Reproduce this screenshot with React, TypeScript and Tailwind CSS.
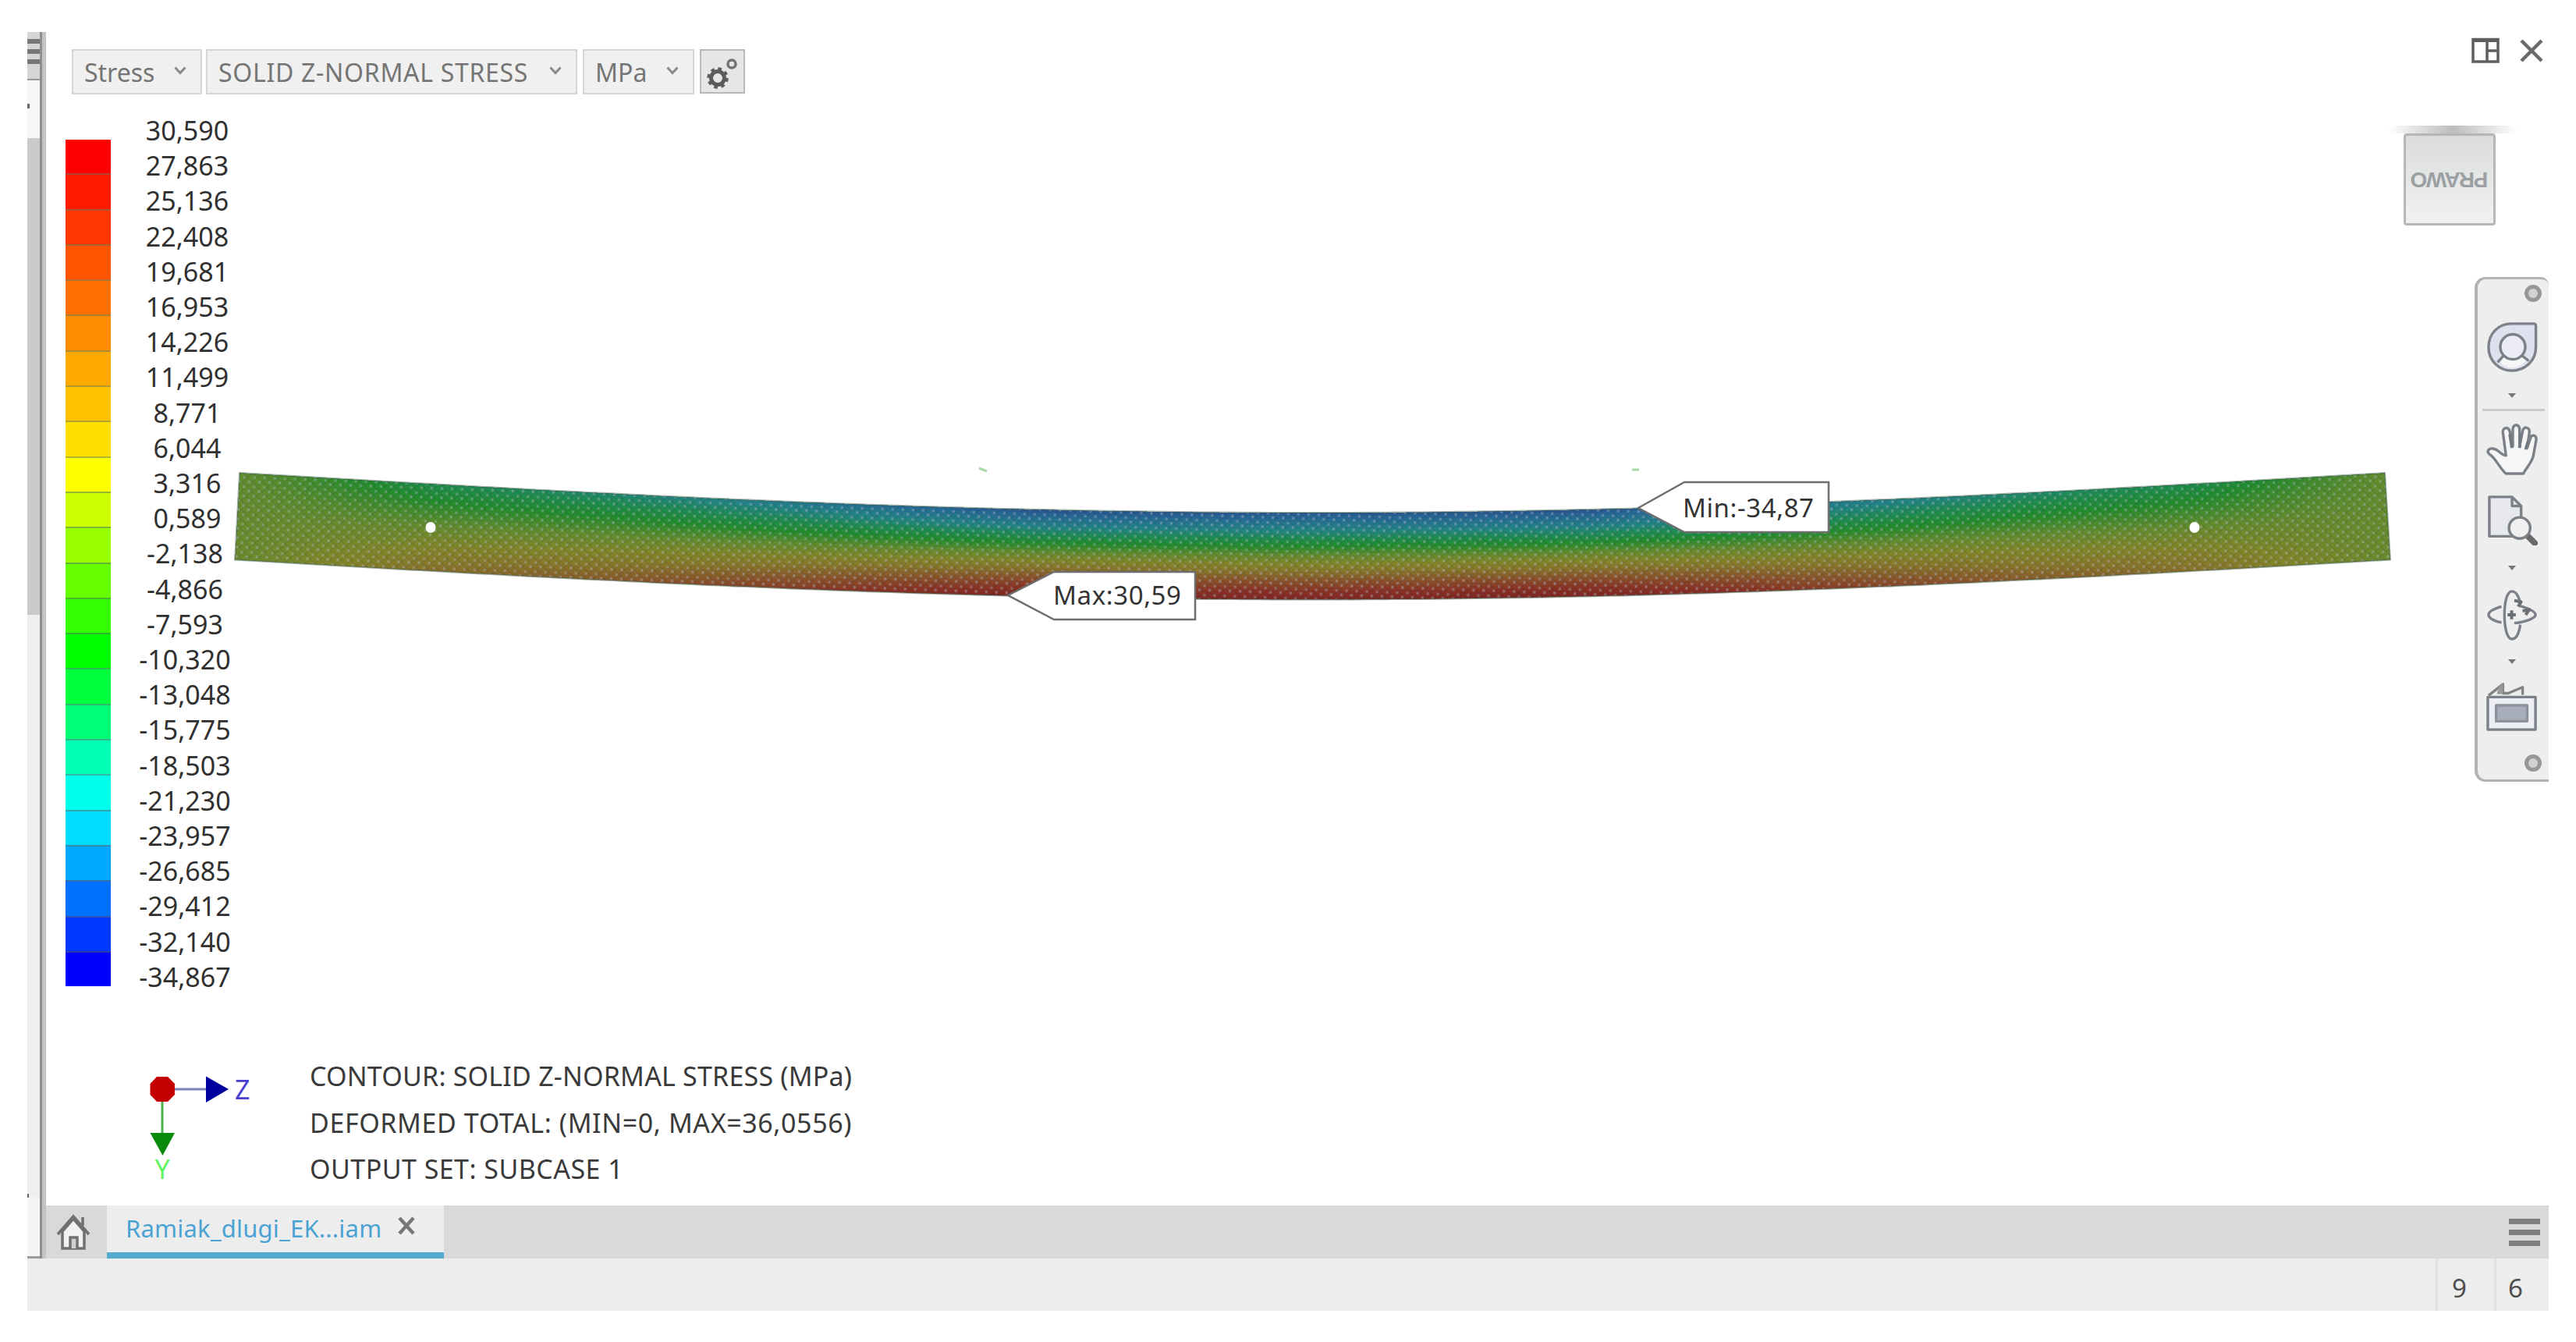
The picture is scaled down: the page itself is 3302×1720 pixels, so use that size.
import React, { ReactNode } from 'react';
import { clsx } from 'clsx';

// Types
interface LegendBand {
  label: string;
  color: string;
}

interface CalloutProps {
  x: number;
  y: number;
  top: number;
  bottom: number;
  right: number;
  text: string;
  textX: number;
  textWidth: number;
}

// Legend data, highest stress first
const bands: LegendBand[] = [
  { label: '30,590', color: '#ff0000' },
  { label: '27,863', color: '#ff1a00' },
  { label: '25,136', color: '#ff3700' },
  { label: '22,408', color: '#ff5500' },
  { label: '19,681', color: '#ff7000' },
  { label: '16,953', color: '#ff8c00' },
  { label: '14,226', color: '#ffa800' },
  { label: '11,499', color: '#ffc200' },
  { label: '8,771', color: '#ffdf00' },
  { label: '6,044', color: '#ffff00' },
  { label: '3,316', color: '#ccff00' },
  { label: '0,589', color: '#99ff00' },
  { label: '-2,138', color: '#66ff00' },
  { label: '-4,866', color: '#33ff00' },
  { label: '-7,593', color: '#00ff00' },
  { label: '-10,320', color: '#00ff3c' },
  { label: '-13,048', color: '#00ff78' },
  { label: '-15,775', color: '#00ffb4' },
  { label: '-18,503', color: '#00ffea' },
  { label: '-21,230', color: '#00dcff' },
  { label: '-23,957', color: '#00a8ff' },
  { label: '-26,685', color: '#0070ff' },
  { label: '-29,412', color: '#0038ff' },
  { label: '-32,140', color: '#0000ff' },
];
const lastLabel = '-34,867';

// Shaded surface colours by normalised stress
const ramp: [number, number[]][] = [
  [-1, [40, 72, 140]],
  [-0.8, [38, 104, 150]],
  [-0.55, [34, 132, 134]],
  [-0.36, [30, 140, 80]],
  [-0.2, [34, 140, 44]],
  [0, [98, 140, 46]],
  [0.18, [130, 134, 40]],
  [0.34, [136, 118, 42]],
  [0.55, [138, 82, 42]],
  [0.78, [138, 48, 36]],
  [1, [126, 34, 32]],
];

// Bending amplitude from the beam end (0) to midspan (1)
const amplitude: [number, number][] = [
  [0, 0.02],
  [0.05, 0.1],
  [0.18, 0.36],
  [0.34, 0.48],
  [0.5, 0.66],
  [0.64, 0.84],
  [0.75, 0.96],
  [1, 0.93],
];

const stressColor = (v: number) => {
  const i = Math.max(1, ramp.findIndex(([stop]) => v <= stop));
  const [a, from] = ramp[i - 1];
  const [b, to] = ramp[i];
  const t = (v - a) / (b - a);
  return `rgb(${from.map((c, k) => Math.round(c + (to[k] - c) * t)).join(',')})`;
};

const amplitudeAt = (s: number) => {
  const i = Math.max(1, amplitude.findIndex(([stop]) => s <= stop));
  const [a, from] = amplitude[i - 1];
  const [b, to] = amplitude[i];
  return from + (to - from) * ((s - a) / (b - a));
};

const COLS = 160;
const ROWS = 28;

const beamPoint = (u: number, f: number) => {
  const left = 307 - 6 * f;
  const right = 3057 + 7 * f;
  const sag = 51 * Math.sin(Math.PI * u);
  return [left + (right - left) * u, 606 + sag + 111.5 * f];
};

const beamOutline = () => {
  const top = Array.from({ length: COLS + 1 }, (_, i) => beamPoint(i / COLS, 0));
  const bottom = Array.from({ length: COLS + 1 }, (_, i) => beamPoint(1 - i / COLS, 1));
  return [...top, ...bottom].map((p) => p.map((n) => n.toFixed(1)).join(',')).join(' ');
};

const Beam: React.FC = () => {
  const outline = beamOutline();
  const cells: ReactNode[] = [];
  for (let c = 0; c < COLS; c++) {
    const u = (c + 0.5) / COLS;
    const amp = amplitudeAt(1 - Math.abs(2 * u - 1));
    for (let r = 0; r < ROWS; r++) {
      const f = (r + 0.5) / ROWS;
      const [x, y] = beamPoint(c / COLS, r / ROWS);
      const [x2, y2] = beamPoint((c + 1) / COLS, r / ROWS);
      const d = `M${x.toFixed(1)} ${y.toFixed(1)}L${(x2 + 1).toFixed(1)} ${y2.toFixed(1)}v5L${x.toFixed(1)} ${(y + 5).toFixed(1)}z`;
      cells.push(<path key={`${c}-${r}`} d={d} fill={stressColor(amp * (2 * f - 1) + 0.02)} />);
    }
  }

  return (
    <g>
      <defs>
        <clipPath id="beam">
          <polygon points={outline} />
        </clipPath>
        <pattern id="mesh" width="13" height="12" patternUnits="userSpaceOnUse" patternTransform="rotate(2)">
          <path d="M0 0 6.5 6 13 0M0 12 6.5 6 13 12" fill="none" stroke="#2d3a3a" strokeOpacity="0.14" strokeWidth="1.4" />
          <ellipse cx="3" cy="6" rx="1.8" ry="2" fill="#b4bccb" fillOpacity="0.42" />
          <ellipse cx="9.5" cy="0.8" rx="1.8" ry="1.6" fill="#b4bccb" fillOpacity="0.38" />
          <ellipse cx="9.5" cy="11.6" rx="1.8" ry="1" fill="#b4bccb" fillOpacity="0.3" />
        </pattern>
      </defs>
      <g clipPath="url(#beam)" shapeRendering="crispEdges">
        {cells}
      </g>
      <polygon points={outline} fill="url(#mesh)" stroke="#3a5a48" strokeOpacity="0.45" strokeWidth="2" />
      <ellipse cx="552" cy="676" rx="6.5" ry="7" fill="#fff" />
      <ellipse cx="2813" cy="676" rx="6.5" ry="7" fill="#fff" />
      <path d="M1255 600l10 4M2092 602h9" stroke="#a5dca5" strokeWidth="3" />
    </g>
  );
};

const Callout: React.FC<CalloutProps> = ({ x, y, top, bottom, right, text, textX, textWidth }) => (
  <g>
    <path
      d={`M${x} ${y}L${x + 59} ${top}H${right}V${bottom}H${x + 59}Z`}
      fill="#fff"
      stroke="#6e6e6e"
      strokeWidth="2.5"
    />
    <text
      x={textX}
      y={y + 12}
      textLength={textWidth}
      className="fill-[#333] font-['Noto_Sans',sans-serif] text-[33px]"
    >
      {text}
    </text>
  </g>
);

const Triad: React.FC = () => (
  <g>
    <path d="M208 1396H266" stroke="#8080bb" strokeWidth="3" />
    <path d="M208 1396V1455" stroke="#4caf50" strokeWidth="3" />
    <path d="M264 1379.500 293 1396 264 1413z" fill="#00009c" />
    <path d="M192.500 1452H224L208.500 1481z" fill="#0a8a0a" />
    <path d="M201 1380H215L224 1389V1403L215 1412H201L192.500 1403V1389z" fill="#c40000" />
    <text x="301" y="1409" className="fill-[#4a3fd0] font-['Noto_Sans',sans-serif] text-[34px]">
      Z
    </text>
    <text x="198.500" y="1511" className="fill-[#62f562] font-['Noto_Sans',sans-serif] text-[34px]">
      Y
    </text>
  </g>
);

const Dropdown: React.FC<{ label: string; className?: string }> = ({ label, className }) => (
  <div
    className={clsx(
      'flex h-[58px] items-center justify-between border-2 border-[#d6d6d6] bg-[#f0f0f0] pl-[14px] pr-[18px] text-[32px] text-[#757575]',
      className
    )}
  >
    <span className="mt-[2px] whitespace-nowrap">{label}</span>
    <svg className="mb-1 h-[11px] w-[16px]" viewBox="0 0 16 11" fill="none" stroke="#8a8a8a" strokeWidth="3">
      <path d="M1.500 1.500 8 8.500 14.500 1.500" />
    </svg>
  </div>
);

const GearsButton: React.FC = () => (
  <div className="flex h-[57px] w-[58px] items-center justify-center border-2 border-[#b9b9b9] bg-[#e6e6e6]">
    <svg className="h-[46px] w-[46px]" viewBox="0 0 46 46" fill="none" stroke="#5c5c5c">
      <circle cx="17" cy="31" r="8.500" strokeWidth="5" />
      <circle cx="17" cy="31" r="12" strokeWidth="3.500" strokeDasharray="4.712 4.712" />
      <circle cx="35" cy="13" r="5" strokeWidth="3.500" stroke="#737373" />
    </svg>
  </div>
);

const Legend: React.FC = () => (
  <div className="ml-[25px] mt-[24px] flex h-[1130px]">
    <div className="mt-[34px] flex h-[1085px] w-[58px] flex-col">
      {bands.map((band, i) => (
        <div
          key={band.label}
          className={clsx('flex-1', i > 0 && 'border-t-2 border-[#5f6f5f]/50')}
          style={{ backgroundColor: band.color }}
        />
      ))}
    </div>
    <div className="ml-[28px] w-[140px] text-center text-[34px] leading-[45.200px] text-[#303030]">
      {[...bands.map((band) => band.label), lastLabel].map((label) => (
        <div key={label} className={clsx(label.startsWith('-') && 'pr-[6px]')}>
          {label}
        </div>
      ))}
    </div>
  </div>
);

const ViewCube: React.FC = () => (
  <div className="mr-[40px] mt-[80px] flex w-[166px] flex-col items-center self-end">
    <div className="h-[10px] w-[166px] bg-linear-to-r from-transparent via-[#bdbdbd] to-transparent" />
    <div className="ml-[-8px] flex h-[118px] w-[118px] items-center justify-center rounded-[4px] border-[3px] border-[#b5b8b8] bg-linear-to-b from-[#dadcdc] to-[#f1f1f1]">
      <span className="rotate-180 font-['Liberation_Sans',sans-serif] text-[28px] font-bold tracking-[-1.500px] text-[#9ba0a3]">
        PRAWO
      </span>
    </div>
  </div>
);

const NavIcon: React.FC<{ children: ReactNode; className?: string }> = ({ children, className }) => (
  <svg
    className={clsx('mr-[4px] h-[66px] w-[66px] shrink-0', className)}
    viewBox="0 0 68 68"
    fill="none"
    stroke="#7b8187"
    strokeWidth="3.500"
    strokeLinejoin="round"
  >
    {children}
  </svg>
);

const MenuDot: React.FC<{ className?: string }> = ({ className }) => (
  <svg className={clsx('mr-[4px] h-[6px] w-[10px] shrink-0', className)} viewBox="0 0 10 6" fill="#777">
    <path d="M0 0h10L5 6z" />
  </svg>
);

const RoundButton: React.FC<{ className?: string }> = ({ className }) => (
  <div className={clsx('size-[22px] shrink-0 self-end rounded-full border-[5px] border-[#979797] bg-[#d2d2d2]', className)} />
);

const NavigationBar: React.FC = () => (
  <div className="mt-[66px] flex h-[647px] w-[95px] flex-col items-center self-end rounded-l-[14px] rounded-tr-[10px] border-y-[3px] border-l-4 border-[#b2b2b2] bg-[#eeeeee]">
    <RoundButton className="mr-[9px] mt-[7px]" />
    <NavIcon className="mt-[25px]">
      <path d="M33 3H63Q65.500 3 65.500 6V34C65.500 52 51 65 34 65S3 52 3 34 16 3 33 3z" fill="#dfe1ee" />
      <path d="M16 50C24 44 44 44 54 49C46 64 24 66 16 50z" fill="#f6f6f6" stroke="none" />
      <circle cx="35" cy="33.500" r="16.500" fill="#ebecf4" />
      <path d="M23 45 15 54M47 45 56 52" />
    </NavIcon>
    <MenuDot className="mt-[26px]" />
    <div className="mt-[14px] h-[3px] w-[80px] shrink-0 bg-[#cbcbcb]" />
    <NavIcon className="mt-[16px]">
      <path
        d="M26 66H49C52 59 60 52 62 43L66 21C66 14 59 14 58 20L54 32 57 11C57 4 49 3 48 10L44 30V7C43 0 36 0 35 7V30L31 10C29 3 21 5 22 12L26 42C20 42 16 34 9 33C3 32 0 37 4 40C13 46 17 58 26 66z"
        fill="#f6f6f6"
      />
      <path d="M31 14 34 32M45 14 44 32M55 24 52 34" strokeWidth="4" stroke="#727a80" />
    </NavIcon>
    <NavIcon className="mt-[24px]">
      <path d="M4 4H34L46 16V56H4z" fill="#e6e8ee" />
      <path d="M34 4V16H46" />
      <path d="M55 56 64 65" stroke="#6a6a6a" strokeWidth="8" strokeLinecap="round" />
      <circle cx="44" cy="45" r="14" fill="#f0f0f0" />
    </NavIcon>
    <MenuDot className="mt-[26px]" />
    <NavIcon className="mt-[24px]">
      <path d="M20 23C10 26 3 30 3 34S11 43 20 44M37 45C54 43 65 38 65 34C65 29 54 25 44 22" />
      <path d="M45 18C42 7 38 3 34 3C28 3 24 15 24 34S28 66 34 66C39 66 43 59 45 47" />
      <path d="M28 34H39M33.500 28V40M37 15 46 17 42 23M48 29 57 27 52 34" strokeWidth="4" stroke="#6b6f74" />
    </NavIcon>
    <MenuDot className="mt-[24px]" />
    <NavIcon className="mt-[21px]">
      <path d="M2 22H65V65H2z" fill="#eceef3" />
      <path d="M13 33H54V54H13z" fill="#a9afba" stroke="#8d939e" />
      <path d="M3 20 22 5V17H29L48 9V19" fill="none" stroke="#838383" />
      <path d="M16 10 22 3V18H14z" fill="#9a9a9a" stroke="none" />
    </NavIcon>
    <RoundButton className="mr-[9px] mt-[29px]" />
  </div>
);

const WindowControls: React.FC = () => (
  <div className="mr-[7px] mt-[7px] flex items-center gap-[26px] self-end">
    <svg className="h-[33px] w-[36px]" viewBox="0 0 36 33" fill="none" stroke="#5f5f5f" strokeWidth="3.500">
      <path d="M2 2.500H34V31H2zM20 3V31M20 17H34" />
      <path d="M1 3.500H35" strokeWidth="5" />
    </svg>
    <svg className="h-[30px] w-[30px]" viewBox="0 0 30 30" fill="none" stroke="#6a6a6a" strokeWidth="4.500">
      <path d="M2 2 28 28M28 2 2 28" />
    </svg>
  </div>
);

const SidePanelEdge: React.FC = () => (
  <div className="flex h-[1572px] w-[24px] border-r-[5px] border-[#c4c4c4]">
    <div className="flex w-[16px] flex-col bg-[#efefef]">
      <div className="flex h-[60px] flex-col gap-[7px] bg-[#d5d5d5] pt-[9px]">
        <div className="h-[6px] bg-[#777]" />
        <div className="h-[6px] bg-[#777]" />
        <div className="h-[6px] bg-[#777]" />
      </div>
      <div className="h-[76px] border-t-2 border-[#999] bg-[#f6f6f6] pt-[30px]">
        <div className="h-[6px] w-[3px] bg-[#666]" />
      </div>
      <div className="h-[611px] bg-[#cacaca]" />
      <div className="mt-[742px] h-[5px] w-[2px] bg-[#666]" />
      <div className="flex-1 border-b-[3px] border-[#9a9a9a] bg-[#f5f5f5]" />
    </div>
    <div className="w-[3px] bg-[#8f8f8f]" />
  </div>
);

const TabBar: React.FC = () => (
  <div className="flex h-[68px] items-center bg-[#d9d9d9]">
    <svg className="ml-[13px] h-[48px] w-[44px]" viewBox="0 0 44 48" fill="none" stroke="#707070" strokeWidth="3.500">
      <path d="M8 23V45H36V23L22 7z" fill="#f1f1f1" />
      <path d="M2 27 22 4 42 27M34 16V5" />
      <path d="M18 45V31H27V45" fill="#d0d0d0" />
    </svg>
    <div className="ml-[21px] flex h-full w-[432px] items-start border-b-8 border-[#55abcf] bg-[#ededed] pl-[24px] pt-[8px]">
      <span className="w-[348px] whitespace-nowrap text-[31px] leading-[42px] tracking-[0.200px] text-[#4ba3d3]">
        Ramiak_dlugi_EK...iam
      </span>
      <svg className="mt-[6px] h-[24px] w-[24px]" viewBox="0 0 24 24" fill="none" stroke="#777" strokeWidth="4.500">
        <path d="M3 2 21 22M21 2 3 22" />
      </svg>
    </div>
    <div className="ml-auto mr-[11px] flex w-[40px] flex-col gap-[7px]">
      <div className="h-[7px] bg-[#7f7f7f]" />
      <div className="h-[7px] bg-[#7f7f7f]" />
      <div className="h-[7px] bg-[#7f7f7f]" />
    </div>
  </div>
);

const StatusBar: React.FC = () => (
  <div className="flex h-[67px] justify-end bg-[#ededed] text-[33px] leading-[76px] text-[#4f4f4f]">
    <div className="w-[75px] border-l-[3px] border-[#e0e0e0] pl-[18px]">9</div>
    <div className="w-[70px] border-l-[3px] border-[#e0e0e0] pl-[15px]">6</div>
  </div>
);

const Viewport: React.FC = () => (
  <div className="relative flex h-[1504px] justify-between overflow-hidden bg-white">
    <svg className="absolute inset-0 h-[1504px] w-[3208px]" viewBox="59 41 3208 1504">
      <Beam />
      <Callout x={2100} y={651} top={618} bottom={682} right={2344} text="Min:-34,87" textX={2157} textWidth={168} />
      <Callout x={1292} y={763} top={733} bottom={794} right={1532} text="Max:30,59" textX={1350} textWidth={164} />
      <Triad />
    </svg>

    <div className="flex flex-col">
      <div className="ml-[33px] mt-[22px] flex">
        <Dropdown label="Stress" className="w-[167px]" />
        <Dropdown label="SOLID Z-NORMAL STRESS" className="ml-[5px] w-[476px] tracking-[0.700px]" />
        <Dropdown label="MPa" className="ml-[7px] mr-[7px] w-[143px]" />
        <GearsButton />
      </div>
      <Legend />
      <div className="ml-[338px] mt-[75px] whitespace-nowrap text-[34px] leading-[59.500px] text-[#3a3a3a]">
        <p className="tracking-[0.200px]">CONTOUR: SOLID Z-NORMAL STRESS (MPa)</p>
        <p className="tracking-[0.600px]">DEFORMED TOTAL: (MIN=0, MAX=36,0556)</p>
        <p className="tracking-[0.450px]">OUTPUT SET: SUBCASE 1</p>
      </div>
    </div>

    <div className="flex flex-col">
      <WindowControls />
      <ViewCube />
      <NavigationBar />
    </div>
  </div>
);

export default function App() {
  return (
    <div className="h-[1720px] w-[3302px] bg-white px-[35px] pt-[41px] font-['Noto_Sans',sans-serif]">
      <div className="flex">
        <SidePanelEdge />
        <div className="flex flex-1 flex-col">
          <Viewport />
          <TabBar />
        </div>
      </div>
      <StatusBar />
    </div>
  );
}
